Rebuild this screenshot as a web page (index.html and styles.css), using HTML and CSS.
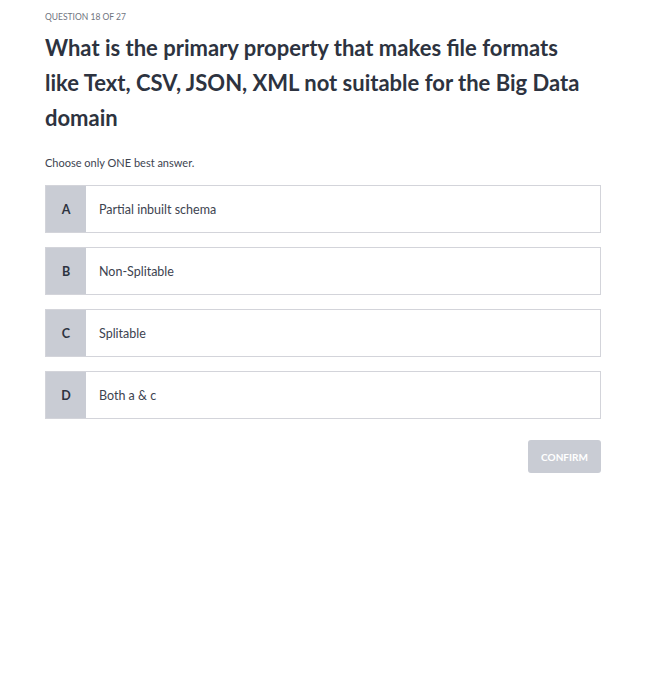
FILE: index.html
```html
<!doctype html>
<html lang="en-US">
  <head>
    <meta charset="utf-8" />
    <title>Quiz</title>
    <link rel="stylesheet" href="styles.css">
  </head>
  <body>
    <div class="quiz">
      <div class="counter">QUESTION 18 OF 27</div>
      <h1 class="question">What is the primary property that makes file formats like Text, CSV, JSON, XML not suitable for the Big Data domain</h1>
      <div class="hint">Choose only ONE best answer.</div>
      <div class="options">
        <div class="option"><span class="letter">A</span><span class="label">Partial inbuilt schema</span></div>
        <div class="option"><span class="letter">B</span><span class="label">Non-Splitable</span></div>
        <div class="option"><span class="letter">C</span><span class="label">Splitable</span></div>
        <div class="option"><span class="letter">D</span><span class="label">Both a &amp; c</span></div>
      </div>
      <div class="actions">
        <button class="confirm" disabled>CONFIRM</button>
      </div>
    </div>
  </body>
</html>
```

FILE: styles.css
```css
body {
  margin: 0;
  background: #fff;
  font-family: "Lato", "Open Sans", sans-serif;
  color: #2d3340;
}
.quiz {
  width: 556px;
  margin-left: 45px;
  padding-top: 11px;
}
.counter {
  font-size: 8.5px;
  color: #6f7480;
  line-height: 12px;
}
.question {
  max-width: 535px;
  font-size: 22px;
  font-weight: 700;
  line-height: 35px;
  margin: 7px 0 0;
  color: #2d3340;
}
.hint {
  margin-top: 21px;
  font-size: 11px;
  line-height: 14px;
  color: #3d4350;
}
.options {
  margin-top: 15px;
  display: flex;
  flex-direction: column;
  gap: 14px;
}
.option {
  display: flex;
  height: 48px;
  border: 1px solid #d3d4da;
  box-sizing: border-box;
  align-items: stretch;
  font-size: 12.5px;
}
.letter {
  width: 40px;
  background: #c9ccd4;
  display: flex;
  align-items: center;
  justify-content: center;
  font-weight: 700;
  color: #2d3340;
}
.label {
  display: flex;
  align-items: center;
  padding-left: 13px;
  color: #3d4350;
}
.actions {
  display: flex;
  justify-content: flex-end;
  margin-top: 21px;
}
.confirm {
  width: 73px;
  height: 33px;
  border: none;
  border-radius: 3px;
  background: #c9ccd4;
  color: #fff;
  font-family: inherit;
  font-weight: 700;
  font-size: 10px;
}
```
